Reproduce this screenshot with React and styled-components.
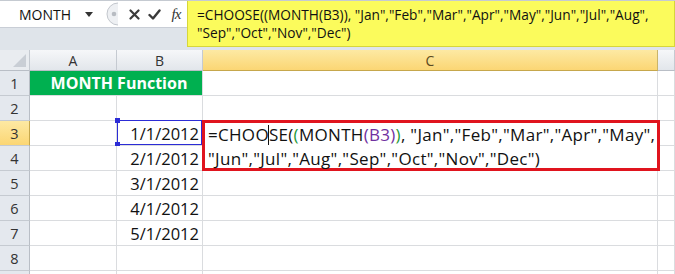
import React from "react";
import styled, { createGlobalStyle } from "styled-components";

const Global = createGlobalStyle`
  html, body { margin: 0; padding: 0; background: #fff; }
  body { width: 675px; height: 274px; overflow: hidden; font-family: "Open Sans", Lato, sans-serif; }
`;

const Page = styled.div`
  width: 675px;
  height: 274px;
  overflow: hidden;
  display: flex;
  flex-direction: column;
`;

const TopBar = styled.div`
  height: 50px;
  flex: none;
  display: flex;
  background: #dfe4ea;
  border-top: 1px solid #c5cad1;
  box-sizing: border-box;
`;

const LeftTools = styled.div`
  width: 187px;
  height: 27px;
  background: #fff;
  display: flex;
  align-items: center;
  flex: none;
  border-bottom: 1px solid #c9ced6;
  box-sizing: border-box;
`;

const NameBox = styled.div`
  width: 100px;
  height: 100%;
  display: flex;
  align-items: center;
  justify-content: space-between;
  padding: 0 7px 0 19px;
  box-sizing: border-box;
  font-family: "Open Sans", Lato, sans-serif;
  font-size: 14px;
  color: #111;
`;

const Tool = styled.div`
  width: ${(p) => p.w || 20}px;
  height: 100%;
  display: flex;
  align-items: center;
  justify-content: center;
  flex: none;
`;

const Fx = styled.span`
  font-family: "Liberation Serif", serif;
  font-style: italic;
  font-size: 15px;
  color: #333;
  letter-spacing: -1px;
`;

const FormulaBox = styled.div`
  flex: 1;
  height: 46px;
  background: #fbfb5c;
  border: 1px solid #d6d63a;
  border-top: none;
  box-sizing: border-box;
  padding: 5px 0 0 9px;
  font-family: "Open Sans", Lato, sans-serif;
  font-size: 13.7px;
  line-height: 18px;
  color: #111;
  white-space: pre;
`;

const Sheet = styled.div`
  display: grid;
  grid-template-columns: 30px 87px 86px 455px 17px;
  grid-template-rows: 21px repeat(9, 25px);
  position: relative;
`;

const Corner = styled.div`
  background: #e9ecf0;
  border-right: 1px solid #c5cad1;
  border-bottom: 1px solid #b9bec6;
  position: relative;
  &::after {
    content: "";
    position: absolute;
    right: 3px;
    bottom: 3px;
    border-left: 13px solid transparent;
    border-bottom: 13px solid #c9ced5;
  }
`;

const ColHead = styled.div`
  background: ${(p) =>
    p.active
      ? "linear-gradient(#fde9a3, #fbd674)"
      : "linear-gradient(#f6f7f9, #e2e6eb)"};
  border-right: 1px solid ${(p) => (p.active ? "#c9b46a" : "#c5cad1")};
  border-bottom: 1px solid ${(p) => (p.active ? "#c6a74c" : "#b9bec6")};
  display: flex;
  align-items: center;
  justify-content: center;
  font-family: "Open Sans", Lato, sans-serif;
  font-size: 14px;
  color: ${(p) => (p.active ? "#5b4a1e" : "#333")};
`;

const RowHead = styled.div`
  background: ${(p) =>
    p.active ? "linear-gradient(#fde9a3, #fbd674)" : "#e4e8ee"};
  border-right: 1px solid ${(p) => (p.active ? "#c6a74c" : "#b9bec6")};
  border-bottom: 1px solid #c5cad1;
  display: flex;
  align-items: center;
  justify-content: center;
  font-family: "Open Sans", Lato, sans-serif;
  font-size: 14.5px;
  color: #333;
`;

const Cell = styled.div`
  border-right: 1px solid #dadcdf;
  border-bottom: 1px solid #dadcdf;
  background: #fff;
  display: flex;
  align-items: center;
  justify-content: flex-end;
  padding-right: 3px;
  font-family: "Open Sans", Lato, sans-serif;
  font-size: 16.5px;
  color: #111;
  position: relative;
`;

const Title = styled.div`
  grid-column: span 2;
  background: #00b050;
  border-right: 1px solid #dadcdf;
  border-bottom: 1px solid #dadcdf;
  color: #fff;
  font-family: "Open Sans", Lato, sans-serif;
  font-weight: 700;
  font-size: 16px;
  display: flex;
  align-items: center;
  justify-content: center;
  padding-left: 6px;
`;

const Selected = styled.div`
  position: absolute;
  inset: -1px 0 0 0;
  border: 1px solid #2c2cd6;
  pointer-events: none;
`;

const Handle = styled.span`
  position: absolute;
  width: 5px;
  height: 5px;
  background: #2c2cd6;
  left: -3px;
  ${(p) => (p.bottom ? "bottom: -3px;" : "top: -3px;")}
`;

const EditCell = styled.div`
  grid-column: 4;
  grid-row: span 2;
  border: 3px solid #e0141e;
  margin: -1px -2px 0 -1px;
  background: #fff;
  padding: 0 0 0 3px;
  font-family: "Open Sans", Lato, sans-serif;
  font-size: 17px;
  letter-spacing: 0.3px;
  line-height: 24px;
  color: #111;
  white-space: pre;
  z-index: 1;
`;

const Caret = styled.span`
  display: inline-block;
  width: 1px;
  height: 20px;
  background: #111;
  vertical-align: -4px;
  margin: 0 -0.5px;
`;

const Paren = styled.span`
  color: ${(p) => p.c};
`;

function Cross() {
  return (
    <svg width="11" height="11" viewBox="0 0 11 11">
      <path d="M1.5 1.5 L9.5 9.5 M9.5 1.5 L1.5 9.5" stroke="#3a3a3a" strokeWidth="2.2" strokeLinecap="round" />
    </svg>
  );
}
function Check() {
  return (
    <svg width="13" height="11" viewBox="0 0 13 11">
      <path d="M1.5 6 L5 9.5 L11.5 1.5" stroke="#3a3a3a" strokeWidth="2.4" fill="none" strokeLinecap="round" strokeLinejoin="round" />
    </svg>
  );
}
function Grip() {
  return (
    <svg width="20" height="24" viewBox="0 0 20 24">
      <path d="M16 1 A11 11 0 0 0 16 23" fill="#eef0f3" stroke="#c3c7cd" strokeWidth="1" />
      <circle cx="12" cy="12" r="2.3" fill="#b8bcc2" />
    </svg>
  );
}
function Triangle() {
  return (
    <svg width="8" height="5" viewBox="0 0 8 5">
      <path d="M0 0 L8 0 L4 5 Z" fill="#333" />
    </svg>
  );
}

const dates = ["1/1/2012", "2/1/2012", "3/1/2012", "4/1/2012", "5/1/2012"];

export default function App() {
  const rows = [];
  for (let r = 1; r <= 9; r++) {
    rows.push(
      <RowHead key={"h" + r} active={r === 3}>
        {r <= 8 ? r : ""}
      </RowHead>
    );
    if (r === 1) {
      rows.push(<Title key="t">MONTH Function</Title>);
      rows.push(<Cell key="c1" />);
    } else {
      const d = r >= 3 && r <= 7 ? dates[r - 3] : "";
      rows.push(<Cell key={"a" + r} />);
      rows.push(
        <Cell key={"b" + r}>
          {d}
          {r === 3 && (
            <Selected>
              <Handle />
              <Handle bottom />
            </Selected>
          )}
        </Cell>
      );
      if (r === 3) {
        rows.push(
          <EditCell key="edit">
            {"=CHOO"}
            <Caret />
            {"SE("}
            <Paren c="#1f9a3a">(</Paren>
            {"MONTH"}
            <Paren c="#7030a0">(B3)</Paren>
            <Paren c="#1f9a3a">)</Paren>
            {', "Jan","Feb","Mar","Apr","May",\n"Jun","Jul","Aug","Sep","Oct","Nov","Dec")'}
          </EditCell>
        );
      } else if (r !== 4) {
        rows.push(<Cell key={"c" + r} />);
      }
    }
    rows.push(<Cell key={"d" + r} />);
  }

  return (
    <Page>
      <Global />
      <TopBar>
        <LeftTools>
          <NameBox>
            MONTH
            <Triangle />
          </NameBox>
          <Tool w={24}>
            <Grip />
          </Tool>
          <Tool w={20}>
            <Cross />
          </Tool>
          <Tool w={21}>
            <Check />
          </Tool>
          <Tool w={22}>
            <Fx>fx</Fx>
          </Tool>
        </LeftTools>
        <FormulaBox>
          {'=CHOOSE((MONTH(B3)), "Jan","Feb","Mar","Apr","May","Jun","Jul","Aug",\n"Sep","Oct","Nov","Dec")'}
        </FormulaBox>
      </TopBar>
      <Sheet>
        <Corner />
        <ColHead>A</ColHead>
        <ColHead>B</ColHead>
        <ColHead active>C</ColHead>
        <ColHead />
        {rows}
      </Sheet>
    </Page>
  );
}
